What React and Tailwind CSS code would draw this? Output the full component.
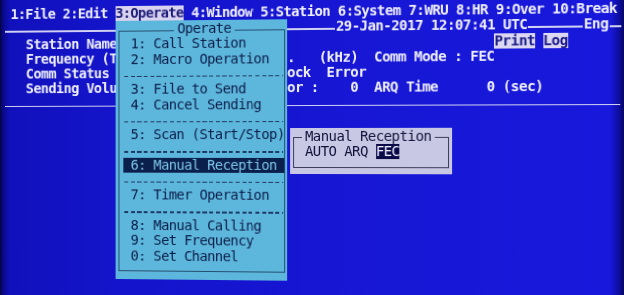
import React from "react";

function Row({ segs, className }) {
  let cur = 0;
  const out = [];
  segs.forEach((s, i) => {
    if (s.c > cur) out.push(" ".repeat(s.c - cur));
    out.push(
      <span key={i} className={s.hl || ""}>
        {s.t}
      </span>
    );
    cur = s.c + s.t.length;
  });
  return <div className={"h-[15.3px] whitespace-pre " + (className || "")}>{out}</div>;
}

const HL_PL = "inline-block bg-[#dcd8f3] text-[#1a1a86]";

function Dash() {
  return (
    <div className="h-[15.3px] ml-[5px] mr-[1px] pt-[8.7px]">
      <div className="h-[1.5px] bg-[image:repeating-linear-gradient(90deg,#1d3a66_0px,#1d3a66_4.2px,transparent_4.2px,transparent_6.7px)]" />
    </div>
  );
}

function Item({ children }) {
  return <div className="h-[15.3px] whitespace-pre pl-[12px]">{children}</div>;
}

export default function App() {
  return (
    <div className="relative w-[624px] h-[295px] overflow-hidden bg-[image:linear-gradient(90deg,#04043a_0px,#08088c_3px,#1111bc_10px,#1414cc_120px,#1717d6_400px,#1818dc_610px,#0d0da0_619px,#060660_624px)]">
      <div className="relative w-[624px] h-[295px] [transform:perspective(1000px)_rotateY(-4.4deg)] font-['DejaVu_Sans_Mono',monospace] text-[14px] leading-[15.3px] text-[#eeeeff] font-bold pt-[4px]">
        {/* row 0 : menu bar */}
        <div className="h-[15.3px] whitespace-pre pl-[2.5px] tracking-[-0.63px]">
          1:File 2:Edit <span className="inline-block bg-[#dad3ef] text-[#1b1b78]">3:Operate</span> 4:Window 5:Station 6:System 7:WRU 8:HR 9:Over 10:Break
        </div>

        {/* row 1 : date line */}
        <div className="h-[15.3px] flex items-start tracking-[-0.58px]">
          <div className="-ml-[3px] mt-[9px] w-[338px] h-[1.5px] bg-[#cfd0f2]" />
          <span className="ml-[1px] whitespace-pre">29-Jan-2017 12:07:41 UTC</span>
          <div className="ml-[1px] mt-[9px] w-[53px] h-[1.5px] bg-[#cfd0f2]" />
          <span className="ml-[0.6px] whitespace-pre">Eng</span>
          <div className="ml-[1px] mt-[9px] w-[11px] h-[1.5px] bg-[#cfd0f2]" />
        </div>

        {/* rows 2-5 : status */}
        <div className="pl-[18.5px] tracking-[-0.53px]">
          <Row
            segs={[
              { c: 0, t: "Station Name" },
              { c: 60, t: "Print", hl: HL_PL },
              { c: 66, t: "Log", hl: HL_PL },
            ]}
          />
          <Row
            segs={[
              { c: 0, t: "Frequency (T" },
              { c: 34, t: "." },
              { c: 38, t: "(kHz)" },
              { c: 45, t: "Comm Mode" },
              { c: 55, t: ":" },
              { c: 57, t: "FEC" },
            ]}
          />
          <Row
            segs={[
              { c: 0, t: "Comm Status" },
              { c: 34, t: "ock" },
              { c: 39, t: "Error" },
            ]}
          />
          <Row
            segs={[
              { c: 0, t: "Sending Volu" },
              { c: 34, t: "or" },
              { c: 37, t: ":" },
              { c: 42, t: "0" },
              { c: 45, t: "ARQ Time" },
              { c: 59, t: "0" },
              { c: 61, t: "(sec)" },
            ]}
          />
        </div>

        {/* row 6 : separator */}
        <div className="h-[15.3px]">
          <div className="-ml-[3px] mt-[9px] w-[617px] h-[1.5px] bg-[#cfd0f2]" />
        </div>

        {/* Operate pull-down menu */}
        <div className="absolute left-[111.5px] top-[18.5px] w-[175px] h-[262.5px] bg-[#5db6db] text-[#0b1c48] font-normal tracking-[-0.58px]">
          <fieldset className="mx-[3px] mt-[1.65px] border border-[#244e72] pb-[7.5px]">
            <legend className="ml-[56px] px-[4px] pb-[3.4px] leading-[15.3px]">Operate</legend>
            <div className="-mt-[3.4px]">
              <Item>1: Call Station</Item>
              <Item>2: Macro Operation</Item>
              <Dash />
              <Item>3: File to Send</Item>
              <Item>4: Cancel Sending</Item>
              <Dash />
              <Item>5: Scan (Start/Stop)</Item>
              <Dash />
              <div className="h-[15.3px] whitespace-pre ml-[4px] mr-[0.5px] pl-[8px] bg-[#0b1f4c] text-[#7cc6e8]">
                6: Manual Reception
              </div>
              <Dash />
              <Item>7: Timer Operation</Item>
              <Dash />
              <Item>8: Manual Calling</Item>
              <Item>9: Set Frequency</Item>
              <Item>0: Set Channel</Item>
            </div>
          </fieldset>
        </div>

        {/* Manual Reception dialog */}
        <div className="absolute left-[290px] top-[128px] w-[161px] h-[46px] bg-[#c8c8e4] text-[#12123c] font-normal tracking-[-0.58px]">
          <fieldset className="mx-[3px] mt-[0.5px] border border-[#3c3c5c] pl-[8px] pb-[8px]">
            <legend className="px-[3px] pb-[3.4px] leading-[15.3px] whitespace-pre">Manual Reception</legend>
            <div className="-mt-[3.4px] pl-[3px] h-[15.3px] whitespace-pre">
              AUTO ARQ <span className="inline-block bg-[#0a0a48] text-[#f0f0ff]">FEC</span>
            </div>
          </fieldset>
        </div>
      </div>
    </div>
  );
}
